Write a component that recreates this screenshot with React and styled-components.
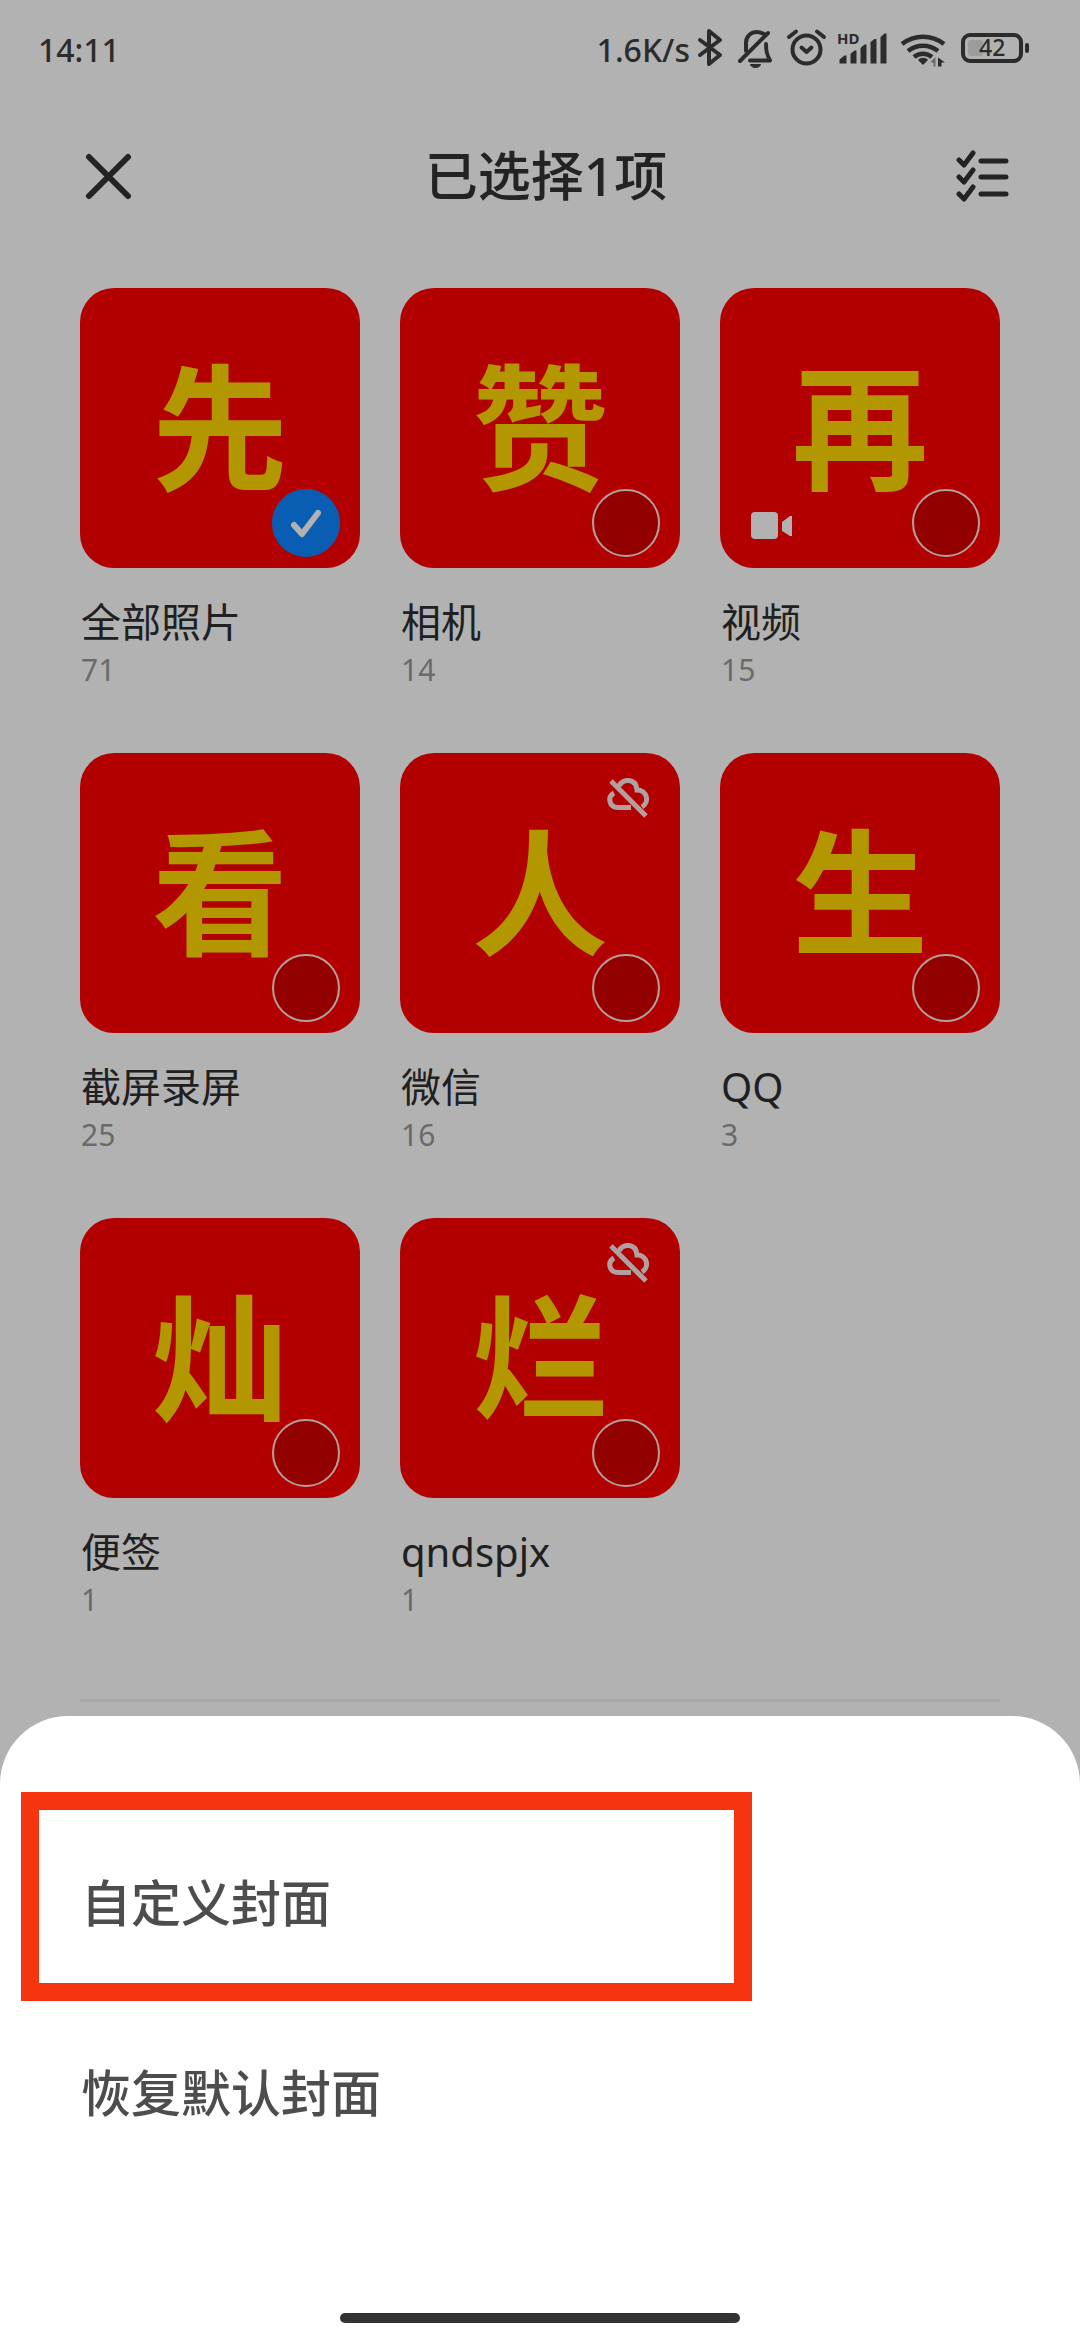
import React from 'react';
import styled, { createGlobalStyle } from 'styled-components';

const GlobalStyle = createGlobalStyle`
  * {
    box-sizing: border-box;
  }

  body {
    margin: 0;
    background-color: #ffffff;
    font-family: 'Noto Sans', 'Noto Sans CJK SC', sans-serif;
  }

  button {
    border: 0;
    padding: 0;
    background: none;
    font-family: inherit;
    cursor: pointer;
  }
`;

const Page = styled.div`
  min-height: 100vh;
  color: #333333;
`;

const StatusBar = styled.div`
  display: flex;
  align-items: center;
  justify-content: space-between;
  height: 100px;
  padding: 0 50px 0 38px;
  color: #404040;
  font-size: 32px;
  font-weight: 500;
  line-height: 48px;
`;

const StatusIcons = styled.div`
  display: flex;
  align-items: center;

  svg {
    display: block;
  }
`;

const Header = styled.header`
  display: flex;
  align-items: center;
  justify-content: space-between;
  height: 152px;
  padding: 0 68px 0 80px;
`;

const Title = styled.h1`
  margin: 0;
  font-size: 53px;
  font-weight: 500;
  line-height: 80px;
`;

const IconButton = styled.button`
  display: flex;
  color: #333333;
`;

const AlbumGrid = styled.ul`
  display: grid;
  grid-template-columns: repeat(3, 1fr);
  gap: 64px 40px;
  margin: 36px 80px 0;
  padding: 0 0 80px;
  border-bottom: 3px solid #f0f0f0;
  list-style: none;
`;

const Cover = styled.label`
  position: relative;
  display: flex;
  align-items: center;
  justify-content: center;
  aspect-ratio: 1;
  border-radius: 34px;
  background-color: #ff0000;
  color: #ffd800;
  font-size: 136px;
  font-weight: 700;
  line-height: 136px;
`;

const CheckCircle = styled.input`
  position: absolute;
  right: 20px;
  bottom: 11px;
  width: 68px;
  height: 68px;
  margin: 0;
  appearance: none;
  border: 2px solid #ffe4e6;
  border-radius: 50%;
  background-color: rgba(0, 0, 0, 0.18);

  &:checked {
    border-color: #0d86ff;
    background-color: #0d86ff;
  }
`;

const CheckMark = styled.svg`
  position: absolute;
  right: 20px;
  bottom: 11px;
  pointer-events: none;
`;

const VideoBadge = styled.svg`
  position: absolute;
  left: 30px;
  bottom: 28px;
`;

const CloudBadge = styled.svg`
  position: absolute;
  top: 22px;
  right: 28px;
`;

const AlbumName = styled.div`
  margin-top: 26px;
  padding-left: 1px;
  color: #2e2e2e;
  font-size: 40px;
  line-height: 56px;
`;

const AlbumCount = styled.div`
  padding-left: 1px;
  color: #999999;
  font-size: 30px;
  line-height: 39px;
`;

const Scrim = styled.div`
  position: fixed;
  inset: 0;
  background-color: rgba(0, 0, 0, 0.3);
`;

const Sheet = styled.div`
  position: fixed;
  right: 0;
  bottom: 0;
  left: 0;
  padding: 92px 0 17px;
  border-radius: 68px 68px 0 0;
  background-color: #ffffff;
`;

const SheetItem = styled.button`
  position: relative;
  display: block;
  width: 100%;
  height: 190px;
  padding: 0 81px;
  color: #4d4d4d;
  font-size: 50px;
  font-weight: 500;
  line-height: 72px;
  text-align: left;
`;

const Highlight = styled.span`
  position: absolute;
  top: -16px;
  right: 328px;
  bottom: -3px;
  left: 21px;
  border: 18px solid #f63510;
`;

const HomeBar = styled.div`
  width: 37%;
  height: 10px;
  margin: 125px auto 0;
  border-radius: 5px;
  background-color: #333333;
`;

const albums = [
  { name: '全部照片', count: 71, cover: '先', selected: true },
  { name: '相机', count: 14, cover: '赞' },
  { name: '视频', count: 15, cover: '再', video: true },
  { name: '截屏录屏', count: 25, cover: '看' },
  { name: '微信', count: 16, cover: '人', offline: true },
  { name: 'QQ', count: 3, cover: '生' },
  { name: '便签', count: 1, cover: '灿' },
  { name: 'qndspjx', count: 1, cover: '烂', offline: true },
];

// One drawing for the whole tray, so the icons keep their spacing
function TrayIcons() {
  return (
    <svg width="340" height="60" viewBox="0 0 340 60" fill="none" stroke="#404040">
      <path d="M10 20l20 15-11 9V11l11 9-20 15" strokeWidth="4" strokeLinejoin="round" strokeLinecap="round" />
      <path d="M56 31v-8c0-7 5-11 11-11 3 0 5 1 7 2M76 24c0 8 1 11 4 16.5H60M50 41L78 13" strokeWidth="4" strokeLinecap="round" strokeLinejoin="round" />
      <path d="M60 44h11a5.5 4 0 0 1-11 0z" fill="#404040" stroke="none" />
      <circle cx="116.5" cy="29.5" r="14" strokeWidth="4" />
      <path d="M111.5 27.5l5 4.5 5-4.5M99 17l7-5.5M127 11.5l7 5.5" strokeWidth="4" strokeLinecap="round" strokeLinejoin="round" />
      <text x="147" y="24" fill="#404040" stroke="none" fontSize="15" fontWeight="700">HD</text>
      <path
        d="M149.500 43.500v-4l5-4h2v8zM160.500 43.500V34l4-3.500h2v13zM170.500 43.500V28l4-3.500h2v19zM180.500 43.500V22l4-3h2v24.500zM190.500 43.500V17l4-3.500h2v30z"
        fill="#404040"
        stroke="none"
      />
      <path d="M212 24a34 34 0 0 1 42 0M218 31a24 24 0 0 1 30 0M224 37a14 14 0 0 1 18 0" strokeWidth="4.5" />
      <path d="M228 40c2-3 8-3 10 0l-5 5z" fill="#404040" stroke="none" />
      <path d="M245.500 37v9.500h-2V43l-3-1z" fill="#999999" stroke="none" />
      <path d="M248 37.500l7 5h-3.500v4h-3.500z" fill="#404040" stroke="none" />
      <rect x="273" y="15" width="58" height="26" rx="7" strokeWidth="4" />
      <rect x="278" y="20" width="15" height="16" rx="3" fill="#e0e0e0" stroke="none" />
      <rect x="335" y="23" width="4" height="10" rx="2" fill="#404040" stroke="none" />
      <text x="289" y="36" fill="#404040" stroke="none" fontSize="23">42</text>
    </svg>
  );
}

function Album({ album }) {
  return (
    <li>
      <Cover>
        {album.cover}
        <CheckCircle type="checkbox" aria-label={album.name} defaultChecked={album.selected} />
        {album.selected && (
          <CheckMark width="68" height="68" viewBox="0 0 68 68" fill="none" stroke="#ffffff" strokeWidth="6" strokeLinecap="round" strokeLinejoin="round">
            <path d="M22 36l8 9 16-21" />
          </CheckMark>
        )}
        {album.video && (
          <VideoBadge width="44" height="28" viewBox="0 0 44 28" fill="#ffffff">
            <rect x="1" y="0" width="27" height="27" rx="4" />
            <path d="M32 10l8-6h2v20h-2l-8-5z" />
          </VideoBadge>
        )}
        {album.offline && (
          <CloudBadge width="48" height="44" viewBox="0 0 48 44" fill="none" stroke="#ffe4e6" strokeWidth="5">
            <path d="M10 18C3 22 5 32 14 32.500h13M15 11c4-8 17-8 18 4 10 0 13 12 5 17M7 6l35 35" />
          </CloudBadge>
        )}
      </Cover>
      <AlbumName>{album.name}</AlbumName>
      <AlbumCount>{album.count}</AlbumCount>
    </li>
  );
}

function App() {
  return (
    <>
      <GlobalStyle />
      <Page>
        <StatusBar>
          <span>14:11</span>
          <StatusIcons>
            <span>1.6K/s</span>
            <TrayIcons />
          </StatusIcons>
        </StatusBar>
        <Header>
          <IconButton aria-label="关闭">
            <svg width="56" height="56" viewBox="0 0 56 56" stroke="currentColor" strokeWidth="6" strokeLinecap="round">
              <path d="M9 9l39 39M48 9L9 48" />
            </svg>
          </IconButton>
          <Title>已选择1项</Title>
          <IconButton aria-label="全选">
            <svg width="56" height="56" viewBox="0 0 56 56" fill="none" stroke="currentColor" strokeWidth="5" strokeLinecap="round" strokeLinejoin="round">
              <path d="M3 12l5 5 9-12M3 29l5 5 9-12M3 46l5 5 9-12M25 13h25M25 29h25M25 46h25" />
            </svg>
          </IconButton>
        </Header>
        <AlbumGrid>
          {albums.map(album => (
            <Album key={album.name} album={album} />
          ))}
        </AlbumGrid>
      </Page>
      <Scrim />
      <Sheet role="dialog">
        <SheetItem>
          自定义封面
          <Highlight />
        </SheetItem>
        <SheetItem>恢复默认封面</SheetItem>
        <HomeBar />
      </Sheet>
    </>
  );
}

export default App;
